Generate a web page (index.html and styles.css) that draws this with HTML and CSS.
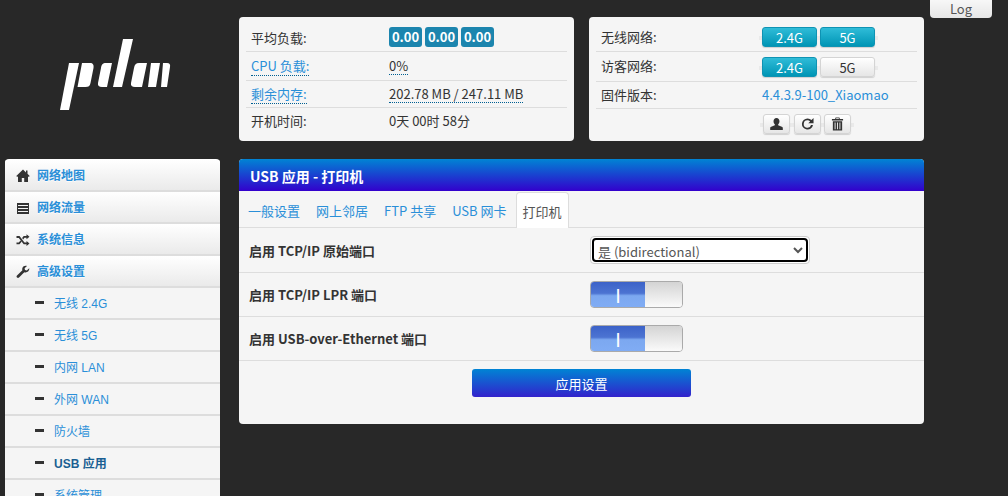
FILE: index.html
```html
<!DOCTYPE html>
<html lang="zh-CN">
<head>
    <meta charset="UTF-8">
    <title>USB 应用 - 打印机</title>
    <link rel="stylesheet" href="styles.css">
</head>
<body>
<button class="log-btn">Log</button>
<div class="page">
    <div class="left">
        <div class="logo">
            <svg width="120" height="80" viewBox="0 0 120 80">
                <g fill="#fff">
                    <path d="M14 28h10l-10 47H5z"/>
                    <path d="M27 28h8c3 0 4 2 3.500 5l-3 15c-.6 3-2 4-5 4h-8z"/>
                    <path d="M48 28h9l-5 24h-5c-3 0-4.500-1.500-4-4l3-15c.6-3.300 1.500-5 5-5z"/>
                    <path d="M68 4h10L67 52H58z"/>
                    <path d="M84 28h8l-5 24h-7c-3 0-4.500-1.500-4-4l3-15c.6-3.300 2-5 5-5z"/>
                    <path d="M96 28h9l-4 24h-8z"/>
                    <path d="M108 28h4c2.500 0 3.500 1.500 3 4l-3 20h-6z"/>
                </g>
            </svg>
        </div>
        <ul class="menu">
            <li class="menu-head">
                <svg class="ico" viewBox="0 0 14 14"><path d="M7 .5 .3 7l.9.9L2 7.200V13h3.800V9h2.400v4H12V7.200l.8.7.9-.9-2.200-2.200V1.500H10v2z"/></svg>
                <a>网络地图</a>
            </li>
            <li class="menu-head">
                <svg class="ico" viewBox="0 0 14 14"><path d="M1 2h12v11H1zM2 4v1h10V4zM2 7v1h10V7zM2 10v1h10v-1z" fill-rule="evenodd"/></svg>
                <a>网络流量</a>
            </li>
            <li class="menu-head">
                <svg class="ico" viewBox="0 0 14 14"><path d="M.5 3h3l5 6.500h2V8l3 2.500-3 2.500v-1.700H7.700L2.800 5H.5zM.5 9.500h2.300l1.700-2.100 1.100 1.400-2.100 2.500h-3zM7.700 3h2.800V1.200l3 2.500-3 2.500V4.800h-2L7.200 6.400 6.100 5z"/></svg>
                <a>系统信息</a>
            </li>
            <li class="menu-head">
                <svg class="ico" viewBox="0 0 14 14"><path d="M13.200 3.200 10.800 5.400 9 5 8.600 3.200 11 1c-2-.6-3.900.2-4.600 1.900-.3.800-.3 1.700 0 2.400L1 10.600c-.6.600-.6 1.500 0 2 .6.600 1.500.6 2 0l5.300-5.400c2.300.8 4.800-.7 5-3.100 0-.3 0-.6-.1-.9z"/></svg>
                <a>高级设置</a>
            </li>
            <li class="menu-sub"><i></i><a>无线 2.4G</a></li>
            <li class="menu-sub"><i></i><a>无线 5G</a></li>
            <li class="menu-sub"><i></i><a>内网 LAN</a></li>
            <li class="menu-sub"><i></i><a>外网 WAN</a></li>
            <li class="menu-sub"><i></i><a>防火墙</a></li>
            <li class="menu-sub current"><i></i><a>USB 应用</a></li>
            <li class="menu-sub"><i></i><a>系统管理</a></li>
        </ul>
    </div>
    <div class="right">
        <div class="status-row">
            <div class="box load">
                <div class="row"><span class="lbl">平均负载:</span><span class="val"><b class="badge">0.00</b><b class="badge">0.00</b><b class="badge">0.00</b></span></div>
                <div class="row"><span class="lbl"><a class="dot">CPU 负载:</a></span><span class="val"><span class="under">0%</span></span></div>
                <div class="row"><span class="lbl"><a class="dot">剩余内存:</a></span><span class="val"><span class="under">202.78 MB / 247.11 MB</span></span></div>
                <div class="row"><span class="lbl">开机时间:</span><span class="val">0天 00时 58分</span></div>
            </div>
            <div class="box net">
                <div class="row"><span class="lbl">无线网络:</span><span class="val group"><button class="btn on">2.4G</button><button class="btn on">5G</button></span></div>
                <div class="row"><span class="lbl">访客网络:</span><span class="val group"><button class="btn on">2.4G</button><button class="btn">5G</button></span></div>
                <div class="row"><span class="lbl">固件版本:</span><span class="val"><a class="link">4.4.3.9-100_Xiaomao</a></span></div>
                <div class="row"><span class="lbl"></span><span class="val group tools">
                    <button class="btn tool"><svg viewBox="0 0 14 14"><path d="M7 .5C5 .5 3.800 2 3.800 4c0 1.300.5 2.600 1.400 3.300v1.100L1.300 10c-.8.300-1.100.9-1.100 1.600v1.900h13.600v-1.900c0-.7-.3-1.300-1.100-1.600L8.800 8.400V7.300C9.700 6.600 10.200 5.300 10.200 4 10.200 2 9 .5 7 .5z"/></svg></button>
                    <button class="btn tool"><svg viewBox="0 0 14 14"><path d="M7 1a6 6 0 1 0 5.900 7h-2.100A4 4 0 1 1 7 3c1.100 0 2.100.4 2.800 1.200L7.800 6.200H13.500V.5l-2.200 2.200A6 6 0 0 0 7 1z"/></svg></button>
                    <button class="btn tool"><svg viewBox="0 0 14 14"><path d="M5 0h4l.6 1.500h3.400V3.200H1V1.500h3.400zM5.700 .8 5.400 1.500h3.200L8.300 .8zM2 4h10V14H2zM3.900 5.300v7.400h1V5.300zM6.500 5.300v7.400h1V5.300zM9.100 5.300v7.400h1V5.300z" fill-rule="evenodd"/></svg></button>
                </span></div>
            </div>
        </div>
        <div class="panel">
            <h2 class="panel-title">USB 应用 - 打印机</h2>
            <ul class="tabs">
                <li><a>一般设置</a></li>
                <li><a>网上邻居</a></li>
                <li><a>FTP 共享</a></li>
                <li><a>USB 网卡</a></li>
                <li class="active"><a>打印机</a></li>
            </ul>
            <div class="form-row">
                <label>启用 TCP/IP 原始端口</label>
                <div class="select-wrap">
                    <select>
                        <option>是 (bidirectional)</option>
                        <option>否</option>
                    </select>
                </div>
            </div>
            <div class="form-row">
                <label>启用 TCP/IP LPR 端口</label>
                <div class="switch"><span class="sw-on">I</span><span class="sw-off"></span></div>
            </div>
            <div class="form-row">
                <label>启用 USB-over-Ethernet 端口</label>
                <div class="switch"><span class="sw-on">I</span><span class="sw-off"></span></div>
            </div>
            <div class="apply"><button class="apply-btn">应用设置</button></div>
        </div>
    </div>
</div>
</body>
</html>
```

FILE: styles.css
```css
:root {
    --bg: #282828;
    --panel: #f5f5f5;
    --line: #ddd;
    --link: #2a8fd8;
    --text: #333;
    --cjk: "Noto Sans CJK SC", "Noto Sans", sans-serif;
}

html, body {
    height: 100%;
    overflow: hidden;
}

body {
    margin: 0;
    background: var(--bg);
    color: var(--text);
    font-family: var(--cjk);
    font-size: 13px;
}

a {
    color: var(--link);
}

.log-btn {
    position: absolute;
    top: -8px;
    left: 930px;
    width: 62px;
    height: 26px;
    padding: 6px 0 0;
    border: 0;
    border-radius: 4px;
    background: linear-gradient(#fff, #e6e6e6);
    color: #555;
    font: 13px var(--cjk);
}

.page {
    display: flex;
    align-items: flex-start;
    padding-left: 5px;
}

.left {
    width: 215px;
    flex: none;
}

.logo {
    height: 159px;
    padding-left: 50px;
    box-sizing: border-box;
    padding-top: 35px;
}

.logo svg {
    display: block;
}

.menu {
    list-style: none;
    margin: 0;
    padding: 1px 0 0;
    background: #fff;
    border-radius: 4px 4px 0 0;
    overflow: hidden;
}

.menu li {
    display: flex;
    align-items: center;
    height: 28px;
    padding-bottom: 2px;
    border-bottom: 2px solid #ddd;
    font-family: "Liberation Sans", "Noto Sans CJK SC", sans-serif;
    font-size: 12px;
}

.menu-head {
    padding-left: 11px;
    background: linear-gradient(#fff, #eaeaea);
    font-weight: bold;
    text-shadow: 0 1px 0 rgba(255, 255, 255, .8);
}

.ico {
    width: 14px;
    height: 14px;
    margin: 4px 7px 0 0;
    fill: #333;
}

.menu-sub {
    padding-left: 30px;
    background: #f5f5f5;
}

.menu-sub i {
    width: 9px;
    height: 3px;
    margin-right: 10px;
    background: #333;
}

.menu-sub.current {
    font-weight: bold;
}

.menu-sub.current a {
    color: #1a5f92;
}

.right {
    width: 685px;
    margin-left: 19px;
    padding-top: 17px;
}

.status-row {
    display: flex;
    justify-content: space-between;
    margin-bottom: 18px;
}

.box {
    width: 335px;
    height: 124px;
    box-sizing: border-box;
    padding: 6px 7px 0;
    background: var(--panel);
    border-radius: 4px;
}

.row {
    display: flex;
    align-items: center;
    height: 28px;
    border-bottom: 1px solid var(--line);
    padding-left: 5px;
}

.load .row:nth-child(3) {
    height: 26px;
}

.net .row:nth-child(2) {
    height: 29px;
}

.net .row:nth-child(3) {
    height: 26px;
}

.load .row:last-child {
    border-bottom: 0;
    height: 26px;
}

.net .row:last-child {
    border-bottom: 0;
    height: 30px;
}

.lbl {
    width: 138px;
    flex: none;
    margin-top: -2px;
}

.load .row:first-child .lbl {
    margin-top: 0;
}

.net .lbl {
    width: 161px;
}

.val {
    display: flex;
    align-items: center;
    gap: 3px;
}

.load .row:last-child .val, .link {
    margin-top: -2px;
}

/* the faint bar that sticks out behind a button group */
.group {
    margin-left: -3px;
    padding: 0 3px;
    background: linear-gradient(transparent 9px, #eaeaea 9px, #eaeaea 13px, transparent 13px);
}

.dot, .under {
    border-bottom: 1px dotted #005f92;
    line-height: 17px;
}

.badge {
    width: 33px;
    height: 20px;
    line-height: 20px;
    border-radius: 3px;
    background: #1c85ae;
    color: #fff;
    text-align: center;
    font-size: 13px;
}

.btn {
    width: 55px;
    height: 20px;
    padding: 0;
    border: 1px solid #d4d4d4;
    border-radius: 3px;
    background: linear-gradient(#fff, #e6e6e6);
    box-shadow: 0 1px 1px rgba(0, 0, 0, .15);
    color: #333;
    font: 13px var(--cjk);
}

.btn.on {
    border-color: #0f93b3;
    background: linear-gradient(#2fbcd8, #0095b5);
    color: #fff;
}

.tools {
    gap: 3.5px;
    margin-left: -2px;
}

.btn.tool {
    display: flex;
    align-items: center;
    justify-content: center;
    width: 27px;
    height: 20px;
}

.btn.tool svg {
    width: 13px;
    height: 14px;
    fill: #333;
}

.panel {
    height: 265px;
    background: var(--panel);
    border-radius: 4px;
    overflow: hidden;
}

.panel-title {
    margin: 0;
    height: 32px;
    line-height: 34px;
    padding-left: 11px;
    background: linear-gradient(#0084d4, #3300cc);
    color: #fff;
    font-size: 14px;
    font-weight: bold;
}

.tabs {
    display: flex;
    align-items: flex-end;
    list-style: none;
    margin: 0;
    height: 36px;
    padding: 0 0 0 1px;
    border-bottom: 1px solid var(--line);
}

.tabs li {
    height: 35px;
    line-height: 38px;
    padding: 0 8px;
    box-sizing: border-box;
}

.tabs li.active {
    margin: 0 0 -1px 1px;
    height: 36px;
    padding: 0 6px;
    background: #fff;
    border: 1px solid var(--line);
    border-bottom: 0;
    border-radius: 4px 4px 0 0;
}

.tabs li.active a {
    color: #555;
}

.form-row {
    display: flex;
    align-items: center;
    height: 43px;
    border-bottom: 1px solid var(--line);
    padding-left: 10px;
}

.tabs + .form-row {
    height: 44px;
}

.form-row label {
    width: 341px;
    flex: none;
    font-weight: bold;
}

.select-wrap {
    padding: 1px;
    border: 1px solid #ccc;
    border-radius: 4px;
    background: #fff;
}

.select-wrap select {
    display: block;
    width: 216px;
    height: 24px;
    padding: 1px 0 0;
    border: 2px solid #000;
    border-radius: 4px;
    background: #fff;
    color: #555;
    font: 13px var(--cjk);
    outline: 0;
}

.switch {
    display: flex;
    width: 93px;
    height: 27px;
    box-sizing: border-box;
    border: 1px solid #aaa;
    border-radius: 4px;
    overflow: hidden;
}

.sw-on {
    width: 54px;
    background: linear-gradient(#3c62c8 0%, #4c74d2 45%, #7ca8f0 55%, #80acf4 100%);
    color: #fff;
    text-align: center;
    line-height: 25px;
    font-size: 19px;
}

.sw-off {
    flex: 1;
    background: linear-gradient(#d4d4d4, #fafafa);
}

.apply {
    display: flex;
    justify-content: center;
    padding: 8px 0 0 0;
}

.apply-btn {
    width: 219px;
    height: 28px;
    padding: 0;
    border: 0;
    border-radius: 3px;
    background: linear-gradient(#0084d4, #3322cc);
    color: #fff;
    font: 13px var(--cjk);
}
```
